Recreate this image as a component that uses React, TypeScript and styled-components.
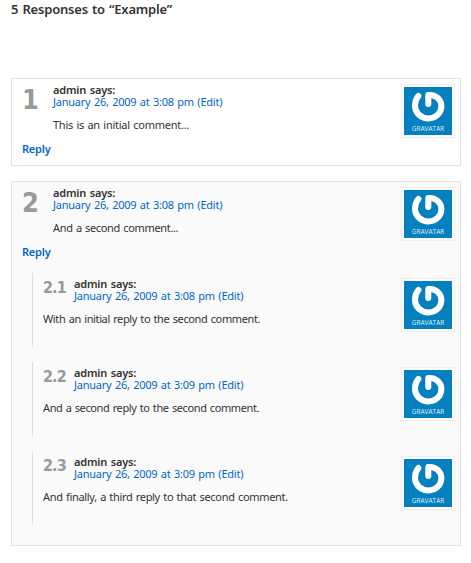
import React from "react";
import styled, { createGlobalStyle } from "styled-components";

const GlobalStyle = createGlobalStyle`
  * { box-sizing: border-box; }
  body {
    margin: 0;
    background: #fff;
    color: #333;
    font: 11px/12px "Noto Sans", "Open Sans", sans-serif;
  }
`;

const Page = styled.main`
  width: 471px;
  height: 563px;
  padding: 1px 10px 0 11px;
  overflow: hidden;
`;

const Title = styled.h3`
  margin: 0 0 61px;
  font-size: 13px;
  font-weight: 600;
  line-height: 16px;
  letter-spacing: -0.2px;
  word-spacing: 1px;
  white-space: nowrap;
`;

const Card = styled.article<{ $shaded?: boolean }>`
  display: flex;
  flex-direction: column;
  width: 450px;
  margin-bottom: 15px;
  padding: 5px 5px ${(p) => (p.$shaded ? 20 : 10)}px 10px;
  border: 1px solid #e2e2e2;
  background: ${(p) => (p.$shaded ? "#fafafa" : "#fff")};
`;

const Row = styled.div`
  display: flex;
  justify-content: space-between;
  align-items: flex-start;
  height: 59px;
`;

const Main = styled.div`
  display: grid;
  grid-template-columns: 31px auto;
  white-space: nowrap;
`;

const Count = styled.span<{ $small?: boolean }>`
  padding-top: 2px;
  height: 24px;
  color: #999;
  font-family: "DejaVu Sans Condensed", "DejaVu Sans", sans-serif;
  font-stretch: condensed;
  font-weight: 700;
  font-size: ${(p) => (p.$small ? 16 : 27)}px;
  line-height: ${(p) => (p.$small ? 16 : 27)}px;
  letter-spacing: ${(p) => (p.$small ? -0.9 : 0)}px;
`;

const Meta = styled.div`
  display: flex;
  flex-direction: column;
`;

const Author = styled.strong`
  font-weight: 600;
  letter-spacing: -0.2px;
  word-spacing: 1px;
`;

const Stamp = styled.a`
  color: #0066cc;
  letter-spacing: -0.23px;
  word-spacing: 0.8px;
`;

const Message = styled.p<{ $wide?: boolean; $tracking: number }>`
  grid-column: ${(p) => (p.$wide ? "1 / -1" : "2")};
  margin: 11px 0 0;
  letter-spacing: ${(p) => p.$tracking}px;
  word-spacing: 0.8px;
`;

const Reply = styled.a`
  align-self: flex-start;
  color: #0066cc;
  font-weight: 600;
  letter-spacing: -0.2px;
`;

const Thread = styled.div`
  display: grid;
  gap: 15px;
  margin: 15px 0 0 10px;
`;

const Nested = styled.div`
  height: 74px;
  padding: 5px 0 0 10px;
  border-left: 1px solid #dedede;
`;

const AvatarFrame = styled.div`
  flex: none;
  width: 54px;
  height: 54px;
  padding: 2px;
  border: 1px solid #eee;
  background: #fff;
`;

const AvatarArt = styled.svg`
  display: block;
  width: 48px;
  height: 48px;
`;

function Avatar() {
  return (
    <AvatarFrame>
      <AvatarArt viewBox="0 0 48 48">
        <rect width="48" height="48" fill="#0580bf" />
        <path
          d="M24.3 17V8C31 7.2 37.4 12 37.4 19C37.4 26.2 31.6 31.4 24.3 31.4C17 31.4 11 26 11 18.8C11 14.6 12.2 11.4 14.4 9"
          fill="none"
          stroke="#fff"
          strokeWidth="6"
          strokeLinecap="round"
          strokeLinejoin="round"
        />
        <text
          x="24"
          y="43.8"
          textAnchor="middle"
          textLength="32.5"
          lengthAdjust="spacingAndGlyphs"
          fontFamily="Open Sans, sans-serif"
          fontSize="6.8"
          fill="#dff0fa"
        >
          GRAVATAR
        </text>
      </AvatarArt>
    </AvatarFrame>
  );
}

interface Comment {
  id: string;
  time: string;
  text: string;
  tracking: number;
}

const first: Comment = { id: "1", time: "3:08", text: "This is an initial comment...", tracking: -0.25 };
const second: Comment = { id: "2", time: "3:08", text: "And a second comment...", tracking: -0.34 };
const replies: Comment[] = [
  { id: "2.1", time: "3:08", text: "With an initial reply to the second comment.", tracking: -0.37 },
  { id: "2.2", time: "3:09", text: "And a second reply to the second comment.", tracking: -0.39 },
  { id: "2.3", time: "3:09", text: "And finally, a third reply to that second comment.", tracking: -0.32 },
];

function Entry({ comment, nested }: { comment: Comment; nested?: boolean }) {
  return (
    <Row>
      <Main>
        <Count $small={nested}>{comment.id}</Count>
        <Meta>
          <Author>admin says:</Author>
          <Stamp>January 26, 2009 at {comment.time} pm (Edit)</Stamp>
        </Meta>
        <Message $wide={nested} $tracking={comment.tracking}>
          {comment.text}
        </Message>
      </Main>
      <Avatar />
    </Row>
  );
}

export default function App() {
  return (
    <>
      <GlobalStyle />
      <Page>
        <Title>5 Responses to “Example”</Title>
        <Card>
          <Entry comment={first} />
          <Reply>Reply</Reply>
        </Card>
        <Card $shaded>
          <Entry comment={second} />
          <Reply>Reply</Reply>
          <Thread>
            {replies.map((reply) => (
              <Nested key={reply.id}>
                <Entry comment={reply} nested />
              </Nested>
            ))}
          </Thread>
        </Card>
      </Page>
    </>
  );
}
